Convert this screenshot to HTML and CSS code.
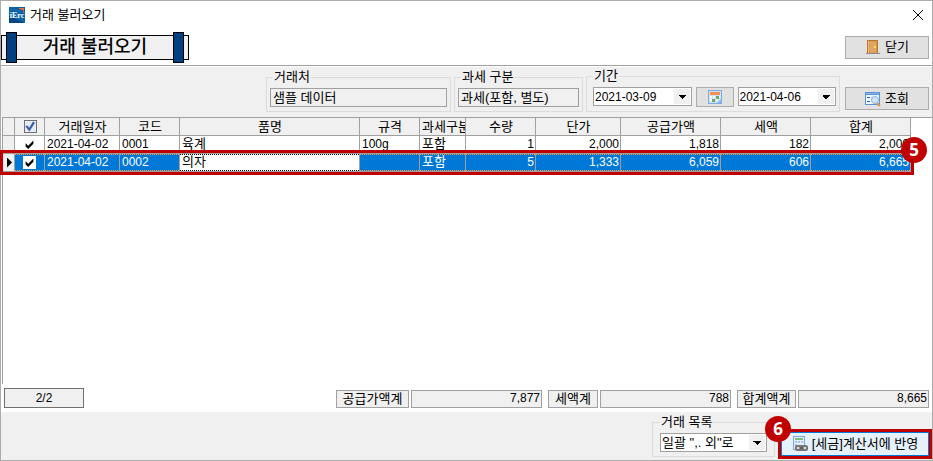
FILE: index.html
```html
<!DOCTYPE html>
<html lang="ko">
<head>
    <meta charset="UTF-8">
    <meta name="viewport" content="width=device-width, initial-scale=1.0">
    <title>거래 불러오기</title>
    <link rel="stylesheet" href="styles.css">
</head>
<body>
    <div class="window">
        <header class="titlebar">
            <svg class="logo" width="16" height="16" viewBox="0 0 16 16" aria-hidden="true">
                <rect width="16" height="16" fill="#0b64a8"/>
                <path d="M0 9L16 16H0z" fill="#08467f"/>
                <path d="M10 1h5v6l-1-4-4-1z" fill="#f26a35"/>
                <text x="8" y="11" text-anchor="middle" class="logo-text">iErc</text>
            </svg>
            <span class="title">거래 불러오기</span>
            <button type="button" class="close" aria-label="닫기">
                <svg width="12" height="12" viewBox="0 0 12 12"><path d="M1 1l10 10M11 1L1 11" stroke="#000" fill="none"/></svg>
            </button>
        </header>

        <div class="heading">
            <h1 class="banner">거래 불러오기</h1>
            <button type="button" class="btn">
                <svg width="16" height="16" viewBox="0 0 16 16" aria-hidden="true">
                    <path d="M1 14h14v1H1z" fill="#8c8c8c"/>
                    <path d="M2 1h11v13H2z" fill="#b87532"/>
                    <path d="M3 2h9v12H3z" fill="#edc083"/>
                    <path d="M4 2h8v12H4z" fill="#d99a50"/>
                    <path d="M5 3h6v10H5z" fill="#dfa661"/>
                    <path d="M9 7h2v2H9z" fill="#ffe14d"/>
                </svg>
                닫기
            </button>
        </div>

        <form class="filters">
            <fieldset class="group group-customer">
                <legend>거래처</legend>
                <input type="text" class="field" value="샘플 데이터" aria-label="거래처" readonly>
            </fieldset>
            <fieldset class="group group-tax">
                <legend>과세 구분</legend>
                <input type="text" class="field" value="과세(포함, 별도)" aria-label="과세 구분" readonly>
            </fieldset>
            <fieldset class="group group-period">
                <legend>기간</legend>
                <span class="combo number">
                    <select aria-label="시작일"><option>2021-03-09</option></select>
                </span>
                <button type="button" class="btn btn-calendar" aria-label="달력">
                    <svg width="14" height="14" viewBox="0 0 14 14">
                        <path d="M0 0h14v14H0z" fill="#7fabe2"/>
                        <path d="M1 1h12v12H1z" fill="#cfe1f7"/>
                        <path d="M2 2h10v3H2z" fill="#f5914a"/>
                        <path d="M2 6h2v2H2zM5 6h2v2H5zM2 9h2v2H2zM11 6h1v2h-1zM8 9h2v2H8z" fill="#fff"/>
                        <path d="M8 6h3v3H8zM4 9h3v3H4z" fill="#63ad5c"/>
                        <path d="M9 13h4V9z" fill="#8fb8ea"/>
                    </svg>
                </button>
                <span class="combo number">
                    <select aria-label="종료일"><option>2021-04-06</option></select>
                </span>
            </fieldset>
            <button type="submit" class="btn">
                <svg width="16" height="16" viewBox="0 0 16 16" aria-hidden="true">
                    <path d="M0 1h15v13H0z" fill="#5b92d8"/>
                    <path d="M1 4h13v9H1z" fill="#eef5fd"/>
                    <path d="M1 2h13v1H1z" fill="#86b4ea"/>
                    <path d="M2 6h3v1H2zM2 10h3v1H2z" fill="#2f66b5"/>
                    <path d="M6 6h7v1H6z" fill="#9bbbe4"/>
                    <circle cx="10" cy="9" r="3.5" fill="#cfe6fa" stroke="#8db3dc"/>
                    <path d="M12 12l3 3" stroke="#e0924a" stroke-width="2"/>
                </svg>
                조회
            </button>
        </form>

        <main class="grid">
            <table>
                <colgroup>
                    <col class="col-mark">
                    <col class="col-check">
                    <col class="col-date">
                    <col class="col-code">
                    <col class="col-name">
                    <col class="col-spec">
                    <col class="col-type">
                    <col class="col-qty">
                    <col class="col-price">
                    <col class="col-supply">
                    <col class="col-vat">
                    <col class="col-sum">
                </colgroup>
                <thead>
                    <tr>
                        <th></th>
                        <th><input type="checkbox" class="check check-all" aria-label="전체 선택" checked></th>
                        <th>거래일자</th>
                        <th>코드</th>
                        <th>품명</th>
                        <th>규격</th>
                        <th>과세구분</th>
                        <th>수량</th>
                        <th>단가</th>
                        <th>공급가액</th>
                        <th>세액</th>
                        <th>합계</th>
                    </tr>
                </thead>
                <tbody>
                    <tr>
                        <td class="mark"></td>
                        <td class="center"><input type="checkbox" class="check" aria-label="육계 선택" checked></td>
                        <td class="number">2021-04-02</td>
                        <td class="number">0001</td>
                        <td>육계</td>
                        <td class="number">100g</td>
                        <td>포함</td>
                        <td class="number right">1</td>
                        <td class="number right">2,000</td>
                        <td class="number right">1,818</td>
                        <td class="number right">182</td>
                        <td class="number right">2,000</td>
                    </tr>
                    <tr class="selected">
                        <td class="mark"><span class="frame"></span><span class="badge badge-row">5</span></td>
                        <td class="center"><input type="checkbox" class="check" aria-label="의자 선택" checked></td>
                        <td class="number">2021-04-02</td>
                        <td class="number">0002</td>
                        <td class="editing">의자</td>
                        <td></td>
                        <td>포함</td>
                        <td class="number right">5</td>
                        <td class="number right">1,333</td>
                        <td class="number right">6,059</td>
                        <td class="number right">606</td>
                        <td class="number right">6,665</td>
                    </tr>
                </tbody>
            </table>
        </main>

        <section class="totals">
            <output class="count number">2/2</output>
            <div class="total">
                <label class="total-label label-supply" for="supply">공급가액계</label>
                <input type="text" class="total-value number" id="supply" value="7,877" readonly>
            </div>
            <div class="total">
                <label class="total-label label-vat" for="vat">세액계</label>
                <input type="text" class="total-value number" id="vat" value="788" readonly>
            </div>
            <div class="total">
                <label class="total-label label-sum" for="sum">합계액계</label>
                <input type="text" class="total-value number" id="sum" value="8,665" readonly>
            </div>
        </section>

        <footer class="footer">
            <fieldset class="group group-list">
                <legend>거래 목록</legend>
                <span class="combo">
                    <select aria-label="거래 목록"><option>일괄 ",. 외"로</option></select>
                </span>
            </fieldset>
            <div class="apply">
                <button type="button" class="btn btn-apply">
                    <svg width="16" height="16" viewBox="0 0 16 16" aria-hidden="true">
                        <path d="M1 0h12v14H1z" fill="#7ea6dc"/>
                        <path d="M2 1h10v12H2z" fill="#e3effc"/>
                        <path d="M3 2h8v2H3z" fill="#7dbb80"/>
                        <path d="M3 5h2v2H3zM6 5h2v2H6zM9 5h2v2H9zM3 8h2v2H3z" fill="#a8c3e6"/>
                        <rect x="3" y="9" width="13" height="6" rx="2" fill="#777"/>
                        <path d="M5 12h3M11 12h3" stroke="#ddd" stroke-width="2"/>
                        <path d="M7 12h5" stroke="#444"/>
                    </svg>
                    [세금]계산서에 반영
                </button>
                <span class="badge badge-apply">6</span>
            </div>
        </footer>
    </div>
</body>
</html>
```
FILE: styles.css
```css
* {
    box-sizing: border-box;
}

body {
    margin: 0;
    background-color: #fff;
    color: #000;
    font-family: "Liberation Sans", "Noto Sans CJK KR", sans-serif;
    font-size: 13px;
    line-height: 14px;
}

button, input, select {
    margin: 0;
    color: inherit;
    font: inherit;
}

.window {
    display: flex;
    flex-direction: column;
    min-height: 100vh;
    border: 1px solid #acacac;
}

.number {
    font-size: 12px;
}

/* Title bar */

.titlebar {
    display: flex;
    align-items: center;
    gap: 5px;
    height: 28px;
    padding: 0 8px;
}

.logo-text {
    fill: #fff;
    font-family: "Liberation Serif", serif;
    font-size: 8px;
    font-weight: bold;
}

.close {
    display: flex;
    margin-left: auto;
    padding: 0;
    border: none;
    background: none;
}

/* Heading */

.heading {
    display: flex;
    align-items: center;
    justify-content: space-between;
    height: 37px;
    padding-right: 3px;
    border-bottom: 1px solid #a0a0a0;
}

.banner {
    display: flex;
    align-items: center;
    justify-content: space-between;
    width: 188px;
    height: 25px;
    margin: 0;
    padding: 0 4px;
    border: 1px solid #000;
    background-color: #f0f0f0;
    font-size: 18px;
    font-weight: 500;
}

.banner::before,
.banner::after {
    content: "";
    width: 9px;
    height: 29px;
    flex: none;
    margin: -3px 0;
    border: 1px solid #000;
    background-color: #004080;
}

.btn {
    display: flex;
    align-items: center;
    justify-content: center;
    gap: 4px;
    width: 84px;
    height: 23px;
    padding: 0;
    border: 1px solid #adadad;
    background-color: #e1e1e1;
    white-space: nowrap;
}

.btn svg {
    flex: none;
}

/* Search conditions */

.filters {
    display: flex;
    align-items: flex-end;
    justify-content: flex-end;
    gap: 3px;
    height: 51px;
    padding: 0 3px 5px;
    border-top: 1px solid #fff;
    background-color: #f0f0f0;
}

.filters > .btn {
    margin: 0 0 2px 2px;
}

.group {
    display: flex;
    gap: 4px;
    min-width: 0;
    margin: 0;
    padding: 4px 3px;
    border: 1px solid #dcdcdc;
}

.group legend {
    margin-left: 3px;
    padding: 0 1px;
}

.group-customer {
    width: 185px;
}

.group-tax {
    width: 129px;
}

.group-period {
    width: 254px;
    padding-left: 6px;
}

.group-period legend {
    margin-left: 0;
}

.field {
    width: 100%;
    height: 19px;
    padding: 0 2px 2px;
    border: 1px solid #a0a0a0;
    background-color: #f0f0f0;
}

.combo {
    display: flex;
    flex: 1;
    align-items: center;
    height: 19px;
    padding-right: 1px;
    border: 1px solid #a0a0a0;
    background-color: #fff;
}

.combo select {
    flex: 1;
    min-width: 0;
    padding: 0 1px;
    border: none;
    appearance: none;
    background: none;
}

.combo::after {
    content: "";
    width: 16px;
    height: 15px;
    flex: none;
    background:
        conic-gradient(from -45deg at 50% 100%, #000 90deg, transparent 0) center / 8px 4px no-repeat,
        #f0f0f0;
}

.btn-calendar {
    width: 38px;
    height: 20px;
}

/* Transaction grid */

.grid {
    flex: 1;
    margin-left: 1px;
    border-top: 1px solid #a0a0a0;
    border-left: 1px solid #a0a0a0;
}

.grid table {
    width: 908px;
    border-spacing: 0;
    table-layout: fixed;
}

.col-mark { width: 12px; }
.col-check { width: 30px; }
.col-date { width: 75px; }
.col-code { width: 60px; }
.col-name { width: 180px; }
.col-spec { width: 60px; }
.col-type { width: 46px; }
.col-qty { width: 70px; }
.col-price { width: 85px; }
.col-supply { width: 100px; }
.col-vat { width: 90px; }
.col-sum { width: 100px; }

.grid th,
.grid td {
    height: 18px;
    padding: 0 1px 2px 2px;
    border-right: 1px solid #a0a0a0;
    border-bottom: 1px solid #a0a0a0;
    overflow: hidden;
    white-space: nowrap;
    text-align: left;
}

.grid th {
    padding-bottom: 0;
    background-color: #f0f0f0;
    font-weight: normal;
    text-align: center;
}

.grid .mark {
    padding: 0;
    background-color: #f0f0f0;
    overflow: visible;
}

.grid .center {
    padding: 0;
    text-align: center;
}

.grid .right {
    text-align: right;
}

.check {
    display: block;
    width: 13px;
    height: 13px;
    margin: 0 auto;
    appearance: none;
    background-color: #fff;
}

.check:checked::before {
    content: "";
    display: block;
    width: 100%;
    height: 100%;
    background-color: #000;
    clip-path: polygon(20% 40%, 40% 60%, 80% 20%, 80% 45%, 40% 85%, 20% 65%);
}

.check-all {
    border: 1px solid #707070;
    background-color: #e4ecf8;
}

.check-all:checked::before {
    background-color: #3c5fa8;
    clip-path: polygon(8% 50%, 24% 38%, 42% 62%, 78% 5%, 95% 15%, 45% 95%);
}

.selected {
    position: relative;
}

.selected td {
    background-color: #0078d7;
    background-image:
        repeating-linear-gradient(90deg, #ff9933 0 1px, transparent 1px 2px),
        repeating-linear-gradient(90deg, #ff9933 0 1px, transparent 1px 2px);
    background-position: top, bottom;
    background-repeat: no-repeat;
    background-size: 100% 1px;
    color: #fff;
}

.selected .editing {
    background-color: #fff;
    background-image:
        repeating-linear-gradient(90deg, #000 0 1px, transparent 1px 2px),
        repeating-linear-gradient(90deg, #000 0 1px, transparent 1px 2px);
    color: #000;
}

.selected .mark {
    background-image: none;
}

.selected .mark::before {
    content: "";
    display: block;
    width: 5px;
    height: 10px;
    margin-left: 4px;
    background-color: #000;
    clip-path: polygon(0 0, 100% 50%, 0 100%);
}

.frame {
    position: absolute;
    inset: -4px -3px -3px;
    border: 3px solid #c00000;
}

.badge {
    position: absolute;
    width: 26px;
    height: 26px;
    border-radius: 50%;
    background-color: #c00000;
    color: #fff;
    font-family: "Noto Sans", sans-serif;
    font-size: 17px;
    font-weight: bold;
    line-height: 26px;
    text-align: center;
}

.badge-row {
    top: -17px;
    right: -16px;
}

/* Totals */

.totals {
    display: flex;
    align-items: flex-end;
    gap: 6px;
    height: 28px;
    padding: 0 3px 4px;
}

.count {
    width: 80px;
    height: 20px;
    margin-right: auto;
    border: 1px solid #707070;
    background-color: #f0f0f0;
    line-height: 18px;
    text-align: center;
}

.total {
    display: flex;
    gap: 2px;
}

.total-label,
.total-value {
    height: 18px;
    border: 1px solid #a0a0a0;
    background-color: #f0f0f0;
    line-height: 16px;
}

.total-label {
    text-align: center;
}

.label-supply { width: 73px; }
.label-vat { width: 50px; }
.label-sum { width: 59px; }

.total-value {
    width: 131px;
    padding: 0 1px 2px;
    text-align: right;
}

/* Footer */

.footer {
    display: flex;
    align-items: flex-end;
    justify-content: flex-end;
    gap: 3px;
    height: 48px;
    padding-bottom: 1px;
    background-color: #f0f0f0;
}

.group-list {
    width: 123px;
    margin-bottom: 2px;
    padding: 4px 7px;
}

.group-list legend {
    margin-left: 0;
}

.apply {
    position: relative;
    border: 3px solid #c00000;
}

.btn-apply {
    width: 148px;
    height: 24px;
    border-color: #0078d7;
    background-color: #e5f1fb;
}

.badge-apply {
    top: -16px;
    left: -16px;
}
```
